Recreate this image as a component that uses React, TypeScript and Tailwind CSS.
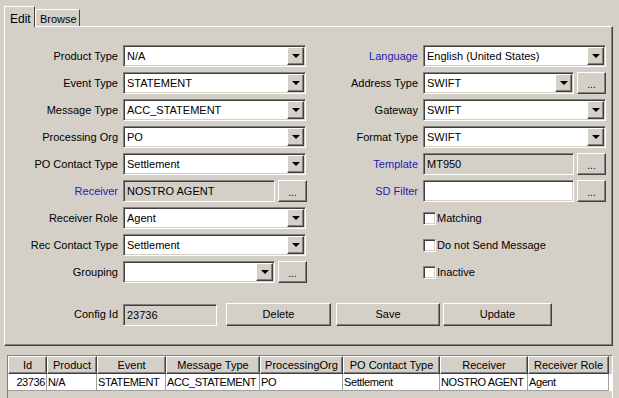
const sunken =
  "border border-t-[#808080] border-l-[#808080] border-b-white border-r-white shadow-[inset_1px_1px_0_#404040,inset_-1px_-1px_0_#d4d0c8]";
const raised =
  "border border-t-white border-l-white border-b-[#404040] border-r-[#404040] shadow-[inset_-1px_-1px_0_#808080] bg-[#d4d0c8]";

const Arrow = () => (
  <div className={`${raised} flex h-full w-[17px] items-center justify-center`}>
    <div className="h-0 w-0 border-x-[4px] border-t-[4px] border-x-transparent border-t-black" />
  </div>
);

const Combo = ({ value, w }: { value: string; w: string }) => (
  <div className={`${sunken} flex h-[22px] ${w} bg-white p-[1px]`}>
    <div className="flex-1 truncate pl-[2px] leading-[18px]">{value}</div>
    <Arrow />
  </div>
);

const Field = ({ value, w, white }: { value: string; w: string; white?: boolean }) => (
  <div className={`${sunken} h-[22px] ${w} ${white ? "bg-white" : "bg-[#d4d0c8]"} pl-[3px] leading-[20px]`}>
    {value}
  </div>
);

const Dots = () => (
  <div className={`${raised} ml-[3px] flex h-[22px] w-[29px] items-end justify-center pb-[3px] text-[10px] leading-none`}>
    ...
  </div>
);

const Label = ({ text, blue, w }: { text: string; blue?: boolean; w: string }) => (
  <div className={`${w} pr-[5px] text-right ${blue ? "text-[#1c1cb4]" : ""}`}>{text}</div>
);

const Check = ({ text }: { text: string }) => (
  <div className="flex items-center">
    <div className={`${sunken} h-[13px] w-[13px] bg-white`} />
    <span className="pl-[1px]">{text}</span>
  </div>
);

const cols = [
  { h: "Id", v: "23736", w: "w-[39px]", right: true },
  { h: "Product", v: "N/A", w: "w-[50px]" },
  { h: "Event", v: "STATEMENT", w: "w-[69px]" },
  { h: "Message Type", v: "ACC_STATEMENT", w: "w-[94px]" },
  { h: "ProcessingOrg", v: "PO", w: "w-[83px]" },
  { h: "PO Contact Type", v: "Settlement", w: "w-[97px]" },
  { h: "Receiver", v: "NOSTRO AGENT", w: "w-[88px]" },
  { h: "Receiver Role", v: "Agent", w: "w-[81px]" },
];

export default function App() {
  return (
    <div className="h-[398px] w-[619px] overflow-hidden bg-[#d4d0c8] font-['Liberation_Sans',Arial,sans-serif] text-[11px] text-black">
      {/* tabs */}
      <div className="flex h-[26px] items-end pl-[4px]">
        <div className="relative z-10 mb-[-1px] flex h-[21px] w-[31px] items-start border border-b-0 border-l-white border-t-white border-r-[#404040] bg-[#d4d0c8] pl-[5px] pt-[3px] text-[12px]">
          Edit
        </div>
        <div className="flex h-[17px] w-[45px] items-start border border-b-0 border-l-white border-t-white border-r-[#404040] bg-[#d4d0c8] pl-[4px] pt-[1px]">
          Browse
        </div>
      </div>

      {/* panel */}
      <div className="ml-[4px] h-[320px] w-[609px] border border-t-white border-l-white border-r-[#404040] border-b-[#404040] shadow-[inset_-1px_-1px_0_#808080]">
        <div className="flex pt-[18px]">
          {/* left column */}
          <div className="flex flex-col gap-[5px]">
            <div className="flex h-[22px] items-center"><Label w="w-[118px]" text="Product Type" /><Combo w="w-[183px]" value="N/A" /></div>
            <div className="flex h-[22px] items-center"><Label w="w-[118px]" text="Event Type" /><Combo w="w-[183px]" value="STATEMENT" /></div>
            <div className="flex h-[22px] items-center"><Label w="w-[118px]" text="Message Type" /><Combo w="w-[183px]" value="ACC_STATEMENT" /></div>
            <div className="flex h-[22px] items-center"><Label w="w-[118px]" text="Processing Org" /><Combo w="w-[183px]" value="PO" /></div>
            <div className="flex h-[22px] items-center"><Label w="w-[118px]" text="PO Contact Type" /><Combo w="w-[183px]" value="Settlement" /></div>
            <div className="flex h-[22px] items-center"><Label w="w-[118px]" text="Receiver" blue /><Field w="w-[152px]" value="NOSTRO AGENT" /><Dots /></div>
            <div className="flex h-[22px] items-center"><Label w="w-[118px]" text="Receiver Role" /><Combo w="w-[183px]" value="Agent" /></div>
            <div className="flex h-[22px] items-center"><Label w="w-[118px]" text="Rec Contact Type" /><Combo w="w-[183px]" value="Settlement" /></div>
            <div className="flex h-[22px] items-center"><Label w="w-[118px]" text="Grouping" /><Combo w="w-[152px]" value="" /><Dots /></div>
          </div>

          {/* right column */}
          <div className="ml-[2px] flex flex-col gap-[5px]">
            <div className="flex h-[22px] items-center"><Label w="w-[114px]" text="Language" blue /><Combo w="w-[183px]" value="English (United States)" /></div>
            <div className="flex h-[22px] items-center"><Label w="w-[114px]" text="Address Type" /><Combo w="w-[151px]" value="SWIFT" /><Dots /></div>
            <div className="flex h-[22px] items-center"><Label w="w-[114px]" text="Gateway" /><Combo w="w-[183px]" value="SWIFT" /></div>
            <div className="flex h-[22px] items-center"><Label w="w-[114px]" text="Format Type" /><Combo w="w-[183px]" value="SWIFT" /></div>
            <div className="flex h-[22px] items-center"><Label w="w-[114px]" text="Template" blue /><Field w="w-[151px]" value="MT950" /><Dots /></div>
            <div className="flex h-[22px] items-center"><Label w="w-[114px]" text="SD Filter" blue /><Field w="w-[151px]" value="" white /><Dots /></div>
            <div className="flex h-[22px] items-center pl-[114px]"><Check text="Matching" /></div>
            <div className="flex h-[22px] items-center pl-[114px]"><Check text="Do not Send Message" /></div>
            <div className="flex h-[22px] items-center pl-[114px]"><Check text="Inactive" /></div>
          </div>
        </div>

        {/* config row */}
        <div className="mt-[20px] flex h-[23px] items-center">
          <Label w="w-[118px]" text="Config Id" />
          <Field w="w-[94px]" value="23736" />
          <div className={`${raised} ml-[9px] flex h-[23px] w-[105px] items-center justify-center`}>Delete</div>
          <div className={`${raised} ml-[5px] flex h-[23px] w-[104px] items-center justify-center`}>Save</div>
          <div className={`${raised} ml-[3px] flex h-[23px] w-[109px] items-center justify-center`}>Update</div>
        </div>
      </div>

      {/* table */}
      <div className="ml-[7px] mt-[9px] h-[60px] w-[606px] border border-t-[#808080] border-l-[#808080] border-r-white border-b-white">
        <div className="flex h-[18px]">
          {cols.map((c) => (
            <div key={c.h} className={`${raised} ${c.w} flex items-center justify-center whitespace-nowrap overflow-hidden`}>{c.h}</div>
          ))}
        </div>
        <div className="flex h-[17px] bg-white tracking-[-0.4px]">
          {cols.map((c) => (
            <div
              key={c.h}
              className={`${c.w} overflow-hidden whitespace-nowrap border-r border-b border-[#a0a0a0] px-[1px] leading-[16px] ${c.right ? "text-right" : ""}`}
            >
              {c.v}
            </div>
          ))}
        </div>
      </div>
    </div>
  );
}
